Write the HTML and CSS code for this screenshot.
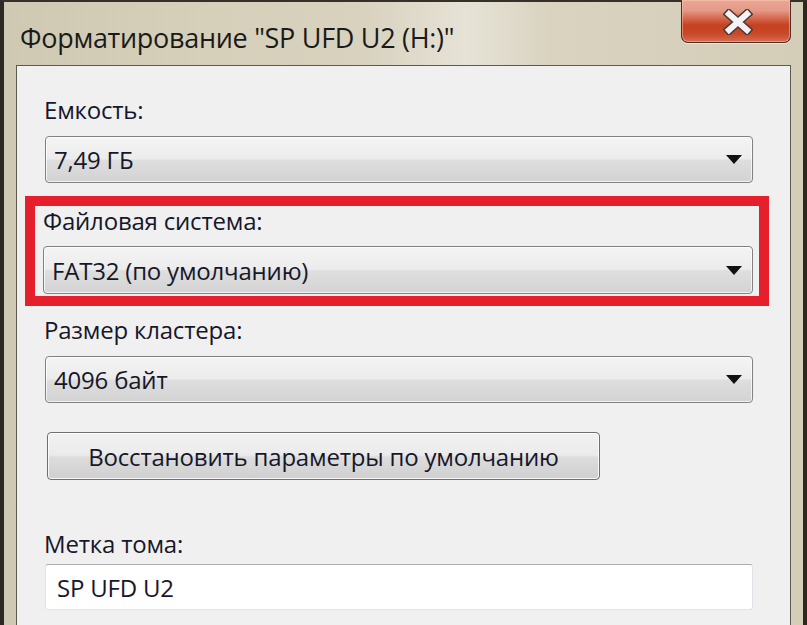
FILE: index.html
```html
<!DOCTYPE html>
<html lang="ru">
<head>
<meta charset="utf-8">
<title>Форматирование</title>
<link rel="stylesheet" href="styles.css">
</head>
<body>
<div class="window">
  <div class="titlebar">
    <div class="title">Форматирование "SP UFD U2 (H:)"</div>
    <div class="close">
      <svg width="30" height="26" viewBox="0 0 30 26">
        <path d="M6 5 L24 21 M24 5 L6 21" stroke="#4a3a36" stroke-width="9" stroke-linecap="square" fill="none"/>
        <path d="M6 5 L24 21 M24 5 L6 21" stroke="#f4f2f2" stroke-width="6" stroke-linecap="square" fill="none"/>
      </svg>
    </div>
  </div>
  <div class="panel">
    <div class="label first">Емкость:</div>
    <div class="combo">
      <span class="value">7,49 ГБ</span>
      <svg class="arrow" width="16" height="9" viewBox="0 0 16 9"><path d="M0 0 H16 L8 9 Z" fill="#111"/></svg>
    </div>
    <div class="highlight">
      <div class="label">Файловая система:</div>
      <div class="combo inbox">
        <span class="value">FAT32 (по умолчанию)</span>
        <svg class="arrow" width="16" height="9" viewBox="0 0 16 9"><path d="M0 0 H16 L8 9 Z" fill="#111"/></svg>
      </div>
    </div>
    <div class="label third">Размер кластера:</div>
    <div class="combo">
      <span class="value">4096 байт</span>
      <svg class="arrow" width="16" height="9" viewBox="0 0 16 9"><path d="M0 0 H16 L8 9 Z" fill="#111"/></svg>
    </div>
    <div class="button">Восстановить параметры по умолчанию</div>
    <div class="label fourth">Метка тома:</div>
    <div class="input">SP UFD U2</div>
  </div>
</div>
</body>
</html>
```
FILE: styles.css
```css
* { box-sizing: border-box; }
html, body { margin: 0; padding: 0; background: #2a2520; }
body { width: 807px; height: 625px; overflow: hidden; }

.window {
  width: 807px;
  height: 625px;
  border-left: 4px solid #2b2722;
  border-right: 4px solid #2b2722;
  border-top: 2px solid #35302a;
  background: linear-gradient(90deg, #cfc8b2 0%, #d6cfba 25%, #d8d2be 45%, #e6e2d6 58%, #d9d3c0 68%, #d4cdb8 100%);
  padding: 0 12px 0 12px;
  display: flex;
  flex-direction: column;
  font-family: "Open Sans", "Noto Sans", sans-serif;
  color: #17172a;
}

.titlebar {
  height: 63px;
  display: flex;
  align-items: flex-start;
  justify-content: space-between;
}

.title {
  font-size: 27px;
  margin-top: 17px;
  margin-left: 4px;
  color: #1a1a1a;
  letter-spacing: -0.3px;
}

.close {
  width: 110px;
  height: 43px;
  margin-top: -2px;
  border: 1px solid #4d2d22;
  border-top: none;
  border-radius: 0 0 7px 7px;
  background: linear-gradient(180deg, #e9a896 0%, #e39a86 25%, #d5644b 45%, #c6411f 60%, #c84828 80%, #d96d52 100%);
  box-shadow: inset 0 0 0 1px rgba(255,200,180,0.5), 0 1px 0 rgba(255,255,255,0.5);
  display: flex;
  align-items: center;
  justify-content: center;
}
.close svg { margin-left: 4px; margin-top: 2px; }

.panel {
  flex: 1;
  background: #f0f0f0;
  border: 1px solid #5f5a4e;
  border-bottom: none;
  padding: 0 37px 0 27px;
}

.label {
  height: 30px;
  line-height: 30px;
  font-size: 24px;
  letter-spacing: -0.2px;
}
.label.first { margin-top: 29px; }
.label.third { margin-top: 9px; }
.label.fourth { margin-top: 49px; }

.combo {
  height: 47px;
  margin-top: 11px;
  margin-left: 1px;
  border: 1px solid #828282;
  border-radius: 4px;
  background: linear-gradient(180deg, #f4f4f4 0%, #ececec 48%, #dedede 52%, #d3d3d3 100%);
  box-shadow: inset 0 0 0 1px rgba(255,255,255,0.7);
  display: flex;
  align-items: center;
  justify-content: space-between;
  padding: 0 10px 0 8px;
  font-size: 24px;
  letter-spacing: -0.2px;
}
.combo.inbox { margin-top: 10px; height: 48px; margin-left: 0; }

.highlight {
  margin: 13px -16px 0 -19px;
  border: 10px solid #e5202c;
  padding: 0 6px 2px 8px;
}

.button {
  width: 553px;
  height: 48px;
  margin-top: 29px;
  margin-left: 3px;
  border: 1px solid #707070;
  border-radius: 4px;
  background: linear-gradient(180deg, #f2f2f2 0%, #ebebeb 48%, #dddddd 52%, #cfcfcf 100%);
  box-shadow: inset 0 0 0 1px rgba(255,255,255,0.8);
  display: flex;
  align-items: center;
  justify-content: center;
  font-size: 24px;
  letter-spacing: -0.2px;
}

.input {
  height: 46px;
  margin-top: 5px;
  margin-left: 1px;
  background: #ffffff;
  border: 1px solid #e2e3ea;
  border-top-color: #abadb3;
  border-radius: 3px;
  display: flex;
  align-items: center;
  padding-left: 11px;
  font-size: 24px;
  letter-spacing: -0.2px;
}
```
